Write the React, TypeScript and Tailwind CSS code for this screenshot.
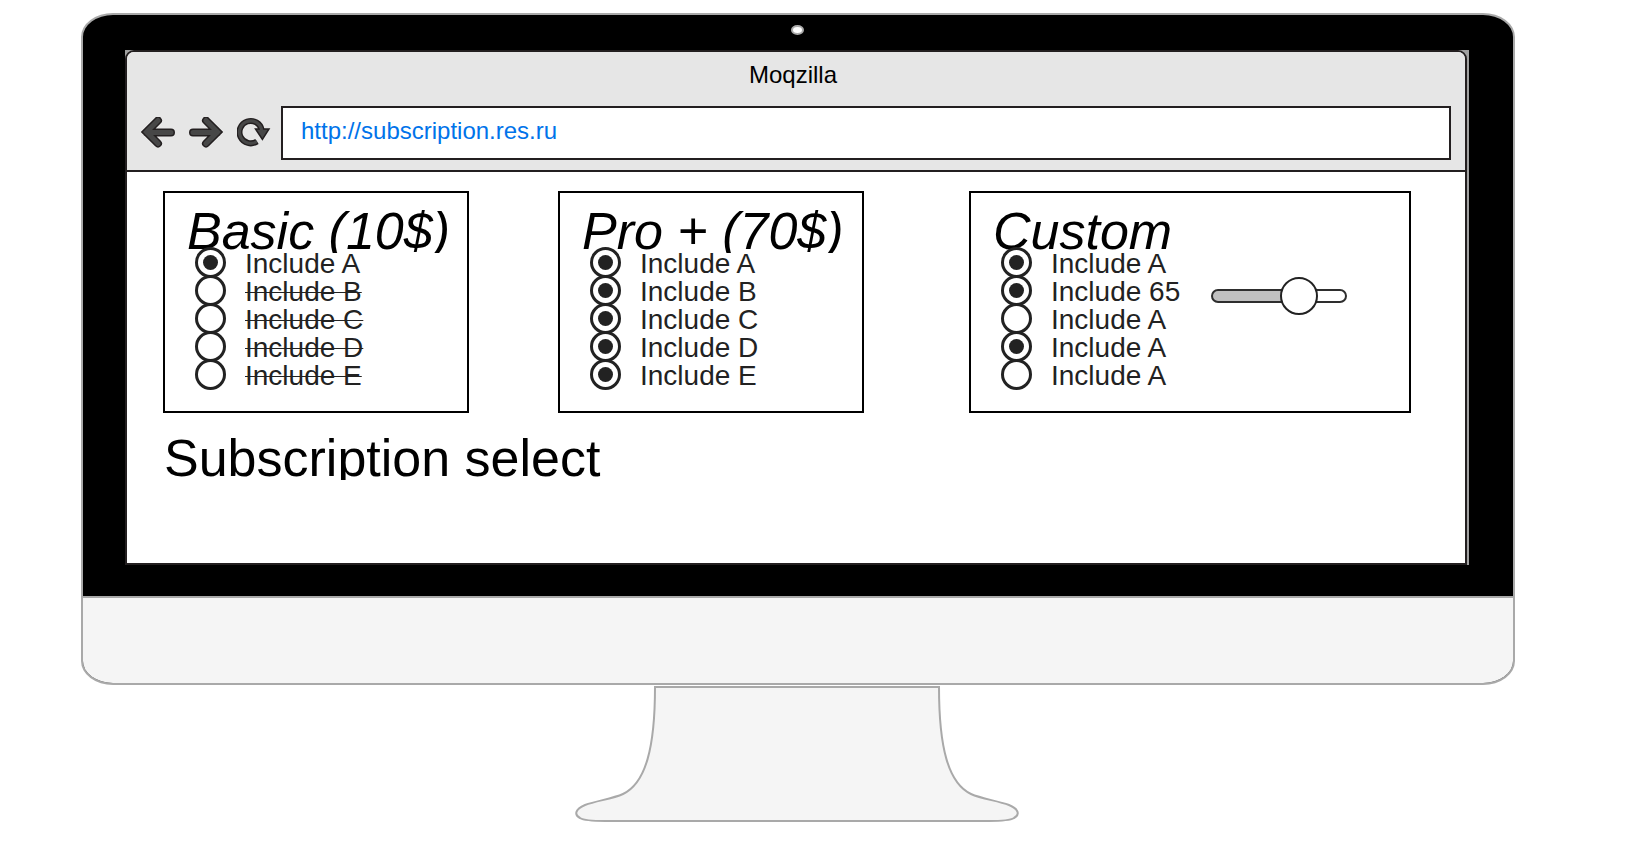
import { useState } from "react";
import type { CSSProperties } from "react";

type Feature = { label: string; on: boolean; struck?: boolean };

const basic: Feature[] = [
  { label: "Include A", on: true },
  { label: "Include B", on: false, struck: true },
  { label: "Include C", on: false, struck: true },
  { label: "Include D", on: false, struck: true },
  { label: "Include E", on: false, struck: true },
];

const pro: Feature[] = [
  { label: "Include A", on: true },
  { label: "Include B", on: true },
  { label: "Include C", on: true },
  { label: "Include D", on: true },
  { label: "Include E", on: true },
];

const custom: Feature[] = [
  { label: "Include A", on: true },
  { label: "Include 65", on: true },
  { label: "Include A", on: false },
  { label: "Include A", on: true },
  { label: "Include A", on: false },
];

function ArrowIcon({ flip = false }: { flip?: boolean }) {
  const d = flip ? "M17 3.500 L28.500 15 L17 26.500 M28 15.500 H4" : "M17 3.500 L5.500 15 L17 26.500 M6 15.500 H30";
  return (
    <svg width="34" height="32" viewBox="0 0 34 32" fill="none" strokeLinecap="round" aria-hidden="true">
      <path d={d} stroke="#231f20" strokeWidth="8" />
      <path d={d} stroke="#474747" strokeWidth="5" />
    </svg>
  );
}

function ReloadIcon() {
  const arc = "M24.700 13 A11.2 11.2 0 1 0 20 24.400";
  return (
    <svg width="34" height="32" viewBox="0 0 34 32" fill="none" aria-hidden="true">
      <path d={arc} stroke="#231f20" strokeWidth="6" />
      <path d="M18.5 12 H32 L25.4 22.4 Z" fill="#474747" stroke="#231f20" strokeWidth="1.5" />
      <path d={arc} stroke="#474747" strokeWidth="3.2" />
    </svg>
  );
}

function FeatureList({ plan, features }: { plan: string; features: Feature[] }) {
  return (
    <ul>
      {features.map((f, i) => (
        <li key={i} className="h-7">
          <label className="flex h-7 items-center gap-[19px] whitespace-nowrap text-[28px] leading-7 text-[#222]">
            <input
              type="radio"
              name={`${plan}-${i}`}
              defaultChecked={f.on}
              className="grid size-[31px] shrink-0 appearance-none place-content-center rounded-full border-3 border-[#222] bg-white before:size-[15px] before:rounded-full checked:before:bg-[#222]"
            />
            <span className={f.struck ? "pt-[3px] line-through decoration-1" : "pt-[3px]"}>{f.label}</span>
          </label>
        </li>
      ))}
    </ul>
  );
}

function PlanTitle({ children }: { children: string }) {
  return (
    <h2 className="h-[51px] overflow-hidden whitespace-nowrap pl-[22px] text-[52px] italic leading-[58px]">
      {children}
    </h2>
  );
}

export default function App() {
  const [amount, setAmount] = useState(71);

  return (
    <div className="bg-white pt-[13px] pr-[119px] pb-8 pl-[81px] font-['Liberation_Sans',Arial,sans-serif] text-black">
      <div className="overflow-hidden rounded-[32px/24px] border-2 border-[#a9a9a9] bg-black">
        <div className="flex h-[35px] justify-center pt-[10px] pr-0.5">
          <div className="h-[10px] w-[13px] rounded-[50%] border-2 border-[#aaa] bg-white" />
        </div>

        <div className="mr-[44px] mb-[31px] ml-[42px] bg-[#a0a0a0] pr-[2px]">
          <main className="rounded-t-[9px] border-2 border-[#231f20] bg-white">
            <header className="rounded-t-[7px] border-b-2 border-[#231f20] bg-[#e6e6e6] pb-[10px]">
              <h1 className="h-[54px] pr-1.5 text-center text-2xl leading-[46px]">Moqzilla</h1>
              <div className="flex items-center pr-[14px] pl-[14px]">
                <div className="flex gap-[14px]">
                  <button type="button" aria-label="Back"><ArrowIcon /></button>
                  <button type="button" aria-label="Forward"><ArrowIcon flip /></button>
                  <button type="button" aria-label="Reload"><ReloadIcon /></button>
                </div>
                <input
                  type="text"
                  aria-label="Address"
                  defaultValue="http://subscription.res.ru"
                  className="ml-[10px] h-[54px] min-w-0 flex-1 border-2 border-[#231f20] bg-white pb-1 pl-[18px] text-2xl text-[#0073ea] outline-none"
                />
              </div>
            </header>

            <div className="min-h-[391px] pt-[19px] pr-[54px] pl-[36px]">
              <div className="grid grid-cols-[306fr_306fr_458fr] gap-[89px]">
                <section className="min-h-[222px] border-2 border-black pt-[9px]">
                  <PlanTitle>Basic (10$)</PlanTitle>
                  <div className="-mt-[5px] pl-[30px]">
                    <FeatureList plan="basic" features={basic} />
                  </div>
                </section>

                <section className="border-2 border-black pt-[9px]">
                  <PlanTitle>Pro + (70$)</PlanTitle>
                  <div className="-mt-[5px] pl-[30px]">
                    <FeatureList plan="pro" features={pro} />
                  </div>
                </section>

                <section className="ml-4 border-2 border-black pt-[9px]">
                  <PlanTitle>Custom</PlanTitle>
                  <div className="-mt-[5px] flex items-start pl-[30px]">
                    <div className="w-[210px]">
                      <FeatureList plan="custom" features={custom} />
                    </div>
                    <input
                      type="range"
                      aria-label="Amount"
                      min={0}
                      max={100}
                      value={amount}
                      onChange={(e) => setAmount(Number(e.target.value))}
                      style={{ "--fill": `${amount}%` } as CSSProperties}
                      className="mt-[29px] h-[38px] w-[136px] appearance-none bg-transparent [&::-webkit-slider-runnable-track]:h-[14px] [&::-webkit-slider-runnable-track]:rounded-full [&::-webkit-slider-runnable-track]:border-2 [&::-webkit-slider-runnable-track]:border-[#2e2e2e] [&::-webkit-slider-runnable-track]:bg-[linear-gradient(to_right,#c0c0c0_var(--fill),#fff_var(--fill))] [&::-webkit-slider-thumb]:-mt-[14px] [&::-webkit-slider-thumb]:size-[38px] [&::-webkit-slider-thumb]:appearance-none [&::-webkit-slider-thumb]:rounded-full [&::-webkit-slider-thumb]:border-2 [&::-webkit-slider-thumb]:border-[#222] [&::-webkit-slider-thumb]:bg-white"
                    />
                  </div>
                </section>
              </div>

              <h2 className="mt-4 h-[51px] overflow-hidden whitespace-nowrap pl-px text-[52px] leading-[58px]">
                Subscription select
              </h2>
            </div>
          </main>
        </div>

        <div className="h-[87px] border-t-2 border-[#a9a9a9] bg-[#f5f5f5]" />
      </div>

      <div className="flex justify-center pr-0.5">
        <svg width="444" height="137" viewBox="0 0 444 137" fill="#f5f5f5" stroke="#a9a9a9" strokeWidth="2" aria-hidden="true">
          <path d="M80 2 C80 62 71 98 48 109 C37 114 22 115.500 10 120 C0 124 -1 130 5 133 C9 135.500 20 136 30 136 H414 C424 136 435 135.500 439 133 C445 130 444 124 434 120 C422 115.500 407 114 396 109 C373 98 364 62 364 2 Z" />
        </svg>
      </div>
    </div>
  );
}
